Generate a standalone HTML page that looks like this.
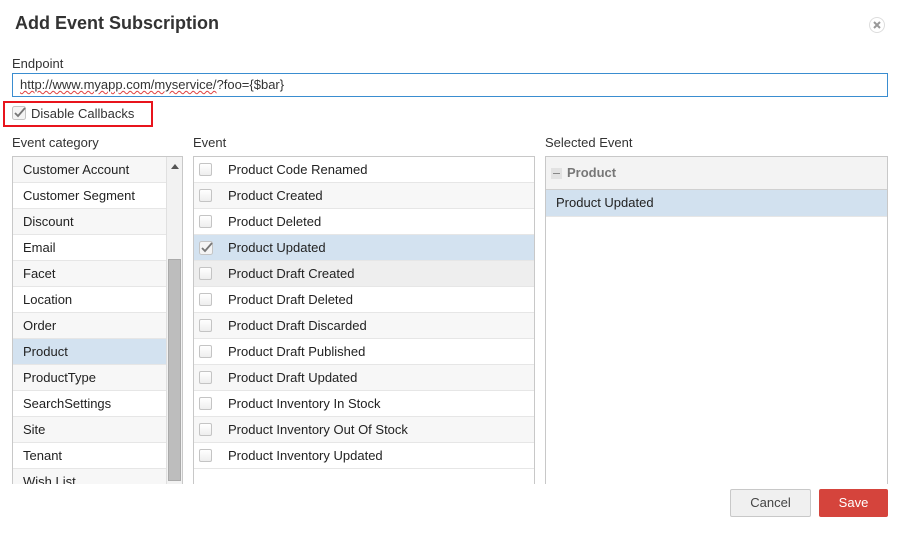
<!DOCTYPE html>
<html><head><style>
*{box-sizing:border-box;margin:0;padding:0}
body{width:899px;height:544px;background:#fff;font-family:"Liberation Sans",sans-serif;font-size:13px;color:#222;position:relative;overflow:hidden}
.a{position:absolute}
.title{left:15px;top:13px;font-size:18px;font-weight:bold;color:#333}
.lbl{font-size:13px;color:#333}
.box{border:1px solid #c8c8c8;overflow:hidden}
.row{height:26px;line-height:25px;border-bottom:1px solid #e6e6e6;white-space:nowrap}
.cat .row{padding-left:10px}
.ev .row{padding-left:34px;position:relative}
.g{background:#f7f7f7}
.cb{position:absolute;left:5px;top:6px;width:13px;height:13px;border:1px solid #c4c4c4;border-radius:2px;background:linear-gradient(#fff,#eee)}
</style></head><body>
<div class="a title">Add Event Subscription</div>
<svg class="a" style="left:868px;top:16px" width="18" height="18" viewBox="0 0 18 18"><circle cx="9" cy="9" r="7.5" fill="#fff" stroke="#ddd"/><path d="M6 6L12 12M12 6L6 12" stroke="#999" stroke-width="2"/></svg>
<div class="a lbl" style="left:12px;top:56px">Endpoint</div>
<div class="a" style="left:12px;top:73px;width:876px;height:24px;border:1px solid #3a8dd0;padding:3px 7px;color:#333"><span style="text-decoration:underline wavy #e04040;text-decoration-thickness:1px">http://www.myapp.com/myservice/</span>?foo={$bar}</div>
<div class="a" style="left:3px;top:101px;width:150px;height:26px;border:2px solid #e8141c"></div>
<svg class="a" style="left:12px;top:106px" width="15" height="15"><rect x="0.5" y="0.5" width="13" height="13" rx="2" fill="#f4f4f4" stroke="#c4c4c4"/><path d="M3 7L6 10L13 2" stroke="#777" stroke-width="1.8" fill="none"/></svg>
<div class="a lbl" style="left:31px;top:106px">Disable Callbacks</div>
<div class="a lbl" style="left:12px;top:135px">Event category</div>
<div class="a lbl" style="left:193px;top:135px">Event</div>
<div class="a lbl" style="left:545px;top:135px">Selected Event</div>
<div class="a box cat" style="left:12px;top:156px;width:171px;height:328px;border-bottom:none">
<div style="width:153px">
<div class="row g">Customer Account</div><div class="row">Customer Segment</div><div class="row g">Discount</div><div class="row">Email</div><div class="row g">Facet</div><div class="row">Location</div><div class="row g">Order</div><div class="row" style="background:#d3e2f0">Product</div><div class="row g">ProductType</div><div class="row">SearchSettings</div><div class="row g">Site</div><div class="row">Tenant</div><div class="row g">Wish List</div>
</div>
<div class="a" style="left:153px;top:0;width:17px;height:328px;background:#f2f2f2;border-left:1px solid #e0e0e0"></div>
<div class="a" style="left:158px;top:7px;width:0;height:0;border-left:4px solid transparent;border-right:4px solid transparent;border-bottom:5px solid #555"></div>
<div class="a" style="left:155px;top:102px;width:13px;height:222px;background:#bdbdbd;border:1px solid #aaa"></div>
</div>
<div class="a box ev" style="left:193px;top:156px;width:342px;height:328px;border-bottom:none">
<div class="row"><span class="cb"></span>Product Code Renamed</div>
<div class="row g"><span class="cb"></span>Product Created</div>
<div class="row"><span class="cb"></span>Product Deleted</div>
<div class="row" style="background:#d3e2f0"><svg class="a" style="left:5px;top:6px" width="15" height="14"><rect x="0.5" y="0.5" width="13" height="13" rx="2" fill="#f4f4f4" stroke="#c4c4c4"/><path d="M3 7L6 10L13 2" stroke="#777" stroke-width="1.8" fill="none"/></svg>Product Updated</div>
<div class="row" style="background:#eeeeee"><span class="cb"></span>Product Draft Created</div>
<div class="row"><span class="cb"></span>Product Draft Deleted</div>
<div class="row g"><span class="cb"></span>Product Draft Discarded</div>
<div class="row"><span class="cb"></span>Product Draft Published</div>
<div class="row g"><span class="cb"></span>Product Draft Updated</div>
<div class="row"><span class="cb"></span>Product Inventory In Stock</div>
<div class="row g"><span class="cb"></span>Product Inventory Out Of Stock</div>
<div class="row"><span class="cb"></span>Product Inventory Updated</div>
</div>
<div class="a box" style="left:545px;top:156px;width:343px;height:328px;border-bottom:none">
<div style="height:33px;background:#f3f3f3;border-bottom:1px solid #d0d0d0;line-height:32px;padding-left:21px;font-weight:bold;color:#777;position:relative"><span class="a" style="left:5px;top:11px;width:11px;height:11px;background:#e2e2e2"><span class="a" style="left:2px;top:5px;width:7px;height:1px;background:#888"></span></span>Product</div>
<div style="height:27px;line-height:26px;background:#d2e1ef;padding-left:10px;border-bottom:1px solid #e6e6e6">Product Updated</div>
</div>
<div class="a" style="left:730px;top:489px;width:81px;height:28px;border:1px solid #c8c8c8;border-radius:2px;background:#f0f0f0;text-align:center;line-height:26px;color:#444">Cancel</div>
<div class="a" style="left:819px;top:489px;width:69px;height:28px;border-radius:2px;background:#d5443c;text-align:center;line-height:28px;color:#fff">Save</div>
</body></html>
